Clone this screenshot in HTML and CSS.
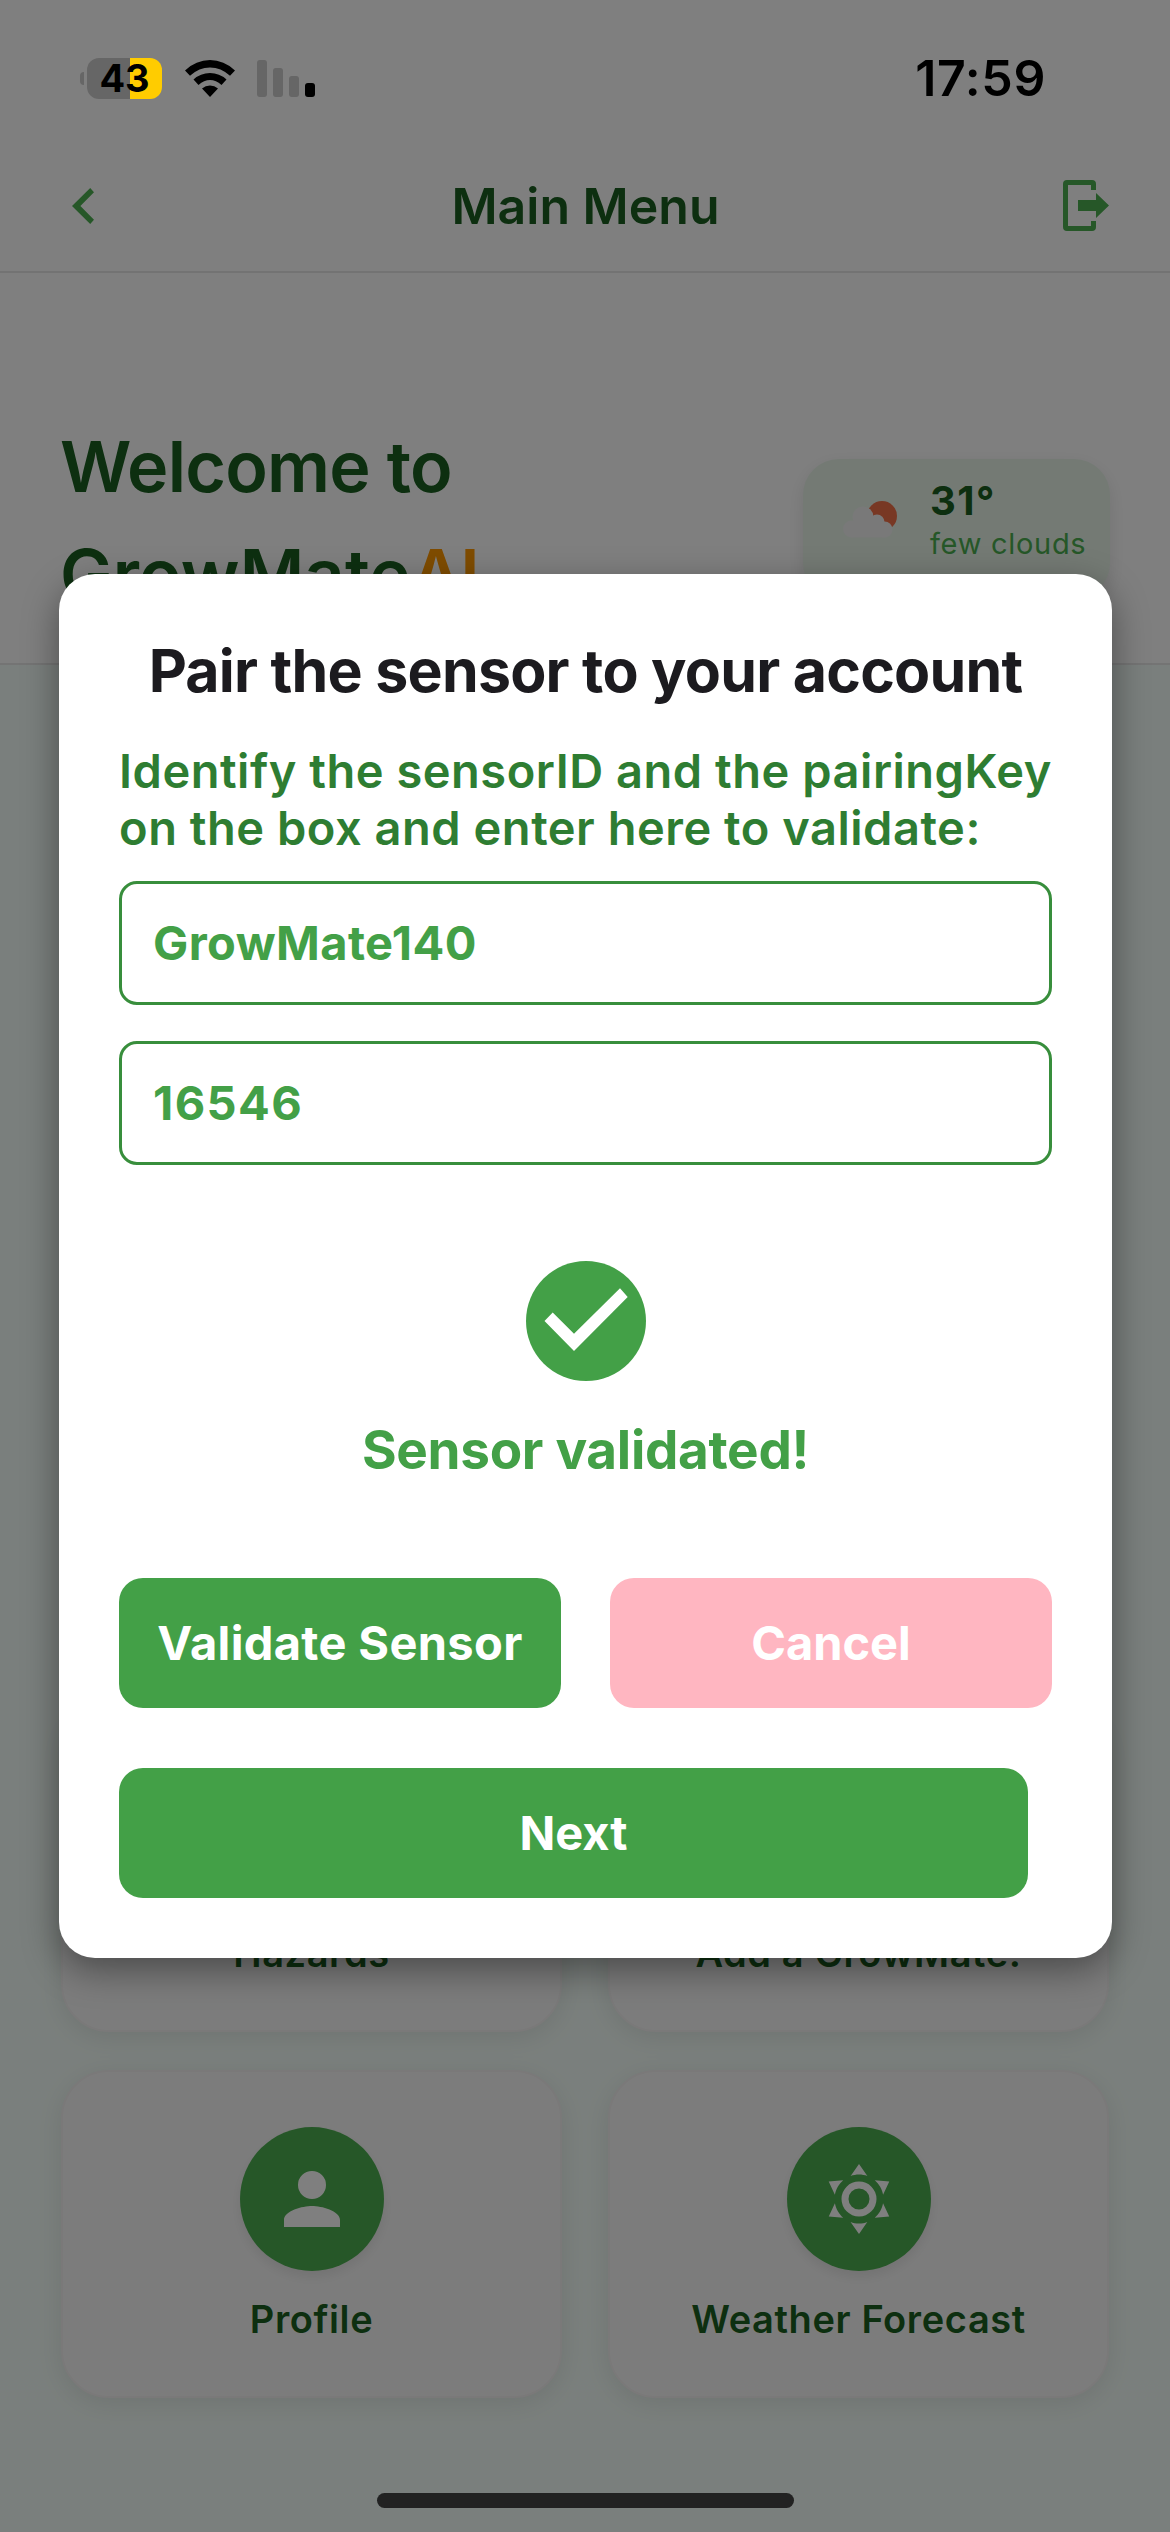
FILE: index.html
```html
<!DOCTYPE html>
<html lang="en">
<head>
<meta charset="utf-8">
<title>GrowMate – Main Menu</title>
<link rel="stylesheet" href="styles.css">
</head>
<body>
<div class="screen">
  <header class="navbar">
    <svg class="back" viewBox="0 0 22 36"><path d="M18.200 0 22 4.200 8.400 18 22 31.800 18.200 36 0 18Z"/></svg>
    <h1 class="nav-title">Main Menu</h1>
    <svg class="logout" viewBox="0 0 46 51"><path d="M28 10V5H5v41h23v-5h5v6q0 4-4 4H4q-4 0-4-4V4q0-4 4-4h25q4 0 4 4v6ZM15 20h18v-7l13 12.500-13 12.500v-7H15Z"/></svg>
  </header>
  <section class="hero">
    <h2 class="welcome"><span class="w1">Welcome to</span><br><span class="w2">GrowMate</span><span class="ai">AI</span></h2>
    <div class="weather">
      <svg class="cloud" viewBox="0 0 54 37"><circle cx="39" cy="15" r="15" fill="#f07048"/><g fill="#f2f2f2"><circle cx="20" cy="16" r="10.500"/><circle cx="8.500" cy="28" r="8.500"/><circle cx="34" cy="21" r="7.500"/><circle cx="41.500" cy="28.500" r="8"/><path d="M8 20h30l4 16.500H8Z"/></g></svg>
      <div class="weather-text"><strong class="temp">31°</strong><span class="desc">few clouds</span></div>
    </div>
  </section>
  <main class="grid">
    <div class="card"><span class="disc"></span><span class="label">Hazards</span></div>
    <div class="card"><span class="disc"></span><span class="label">Add a GrowMate!</span></div>
    <div class="card">
      <span class="disc"><svg viewBox="0 0 24 24"><path d="M12 12a4 4 0 1 0 0-8 4 4 0 0 0 0 8Zm0 2c-2.670 0-8 1.340-8 4v2h16v-2c0-2.660-5.330-4-8-4Z"/></svg></span>
      <span class="label">Profile</span>
    </div>
    <div class="card">
      <span class="disc"><svg viewBox="0 0 24 24"><path d="M12,7A5,5 0 0,1 17,12A5,5 0 0,1 12,17A5,5 0 0,1 7,12A5,5 0 0,1 12,7M12,9A3,3 0 0,0 9,12A3,3 0 0,0 12,15A3,3 0 0,0 15,12A3,3 0 0,0 12,9M12,2L14.39,5.42C13.65,5.15 12.84,5 12,5C11.16,5 10.35,5.15 9.61,5.42L12,2M3.34,7L7.5,6.65C6.9,7.16 6.36,7.78 5.94,8.5C5.5,9.24 5.25,10 5.11,10.79L3.34,7M3.36,17L5.12,13.23C5.26,14 5.53,14.78 5.95,15.5C6.37,16.24 6.91,16.86 7.5,17.37L3.36,17M20.65,7L18.88,10.79C18.74,10 18.47,9.23 18.05,8.5C17.63,7.78 17.1,7.15 16.5,6.64L20.65,7M20.64,17L16.5,17.36C17.09,16.85 17.62,16.22 18.04,15.5C18.46,14.77 18.73,14 18.87,13.21L20.64,17M12,22L9.59,18.56C10.33,18.83 11.14,19 12,19C12.82,19 13.63,18.83 14.37,18.56L12,22Z"/></svg></span>
      <span class="label">Weather Forecast</span>
    </div>
  </main>
</div>

<div class="overlay">
  <div class="status">
    <div class="status-left">
      <span class="nub"></span>
      <span class="battery">43</span>
      <svg class="wifi" viewBox="0 0 50 37"><path d="M0 10.500Q11 0 25 0T50 10.500L45 15.800Q36 7.500 25 7.500T5 15.800ZM8.500 19.500Q15.500 13 25 13T41.500 19.500L36.500 25Q31 20 25 20T13.500 25ZM17 28.500Q20.500 25.500 25 25.500T33 28.500L25 37Z"/></svg>
      <svg class="bars" viewBox="0 0 58 37"><g fill="#666"><rect width="10" height="37" rx="3"/><rect x="16" y="8" width="10" height="29" rx="3"/><rect x="32" y="16" width="10" height="21" rx="3"/></g><rect x="48" y="23" width="10" height="14" rx="3"/></svg>
    </div>
    <span class="time">17:59</span>
  </div>

  <section class="dialog">
    <h2 class="dialog-title">Pair the sensor to your account</h2>
    <p class="hint">Identify the sensorID and the pairingKey<br>on the box and enter here to validate:</p>
    <div class="field">GrowMate140</div>
    <div class="field key">16546</div>
    <div class="result">
      <svg class="check" viewBox="0 0 120 120"><circle cx="60" cy="60" r="60" fill="#43a047"/><path d="M18.500 60 26.700 51.500 48 72.800 94 27.200 101.700 36 48 90Z" fill="#fff"/></svg>
      <span class="result-text">Sensor validated!</span>
    </div>
    <div class="actions">
      <div class="btn validate">Validate Sensor</div>
      <div class="btn cancel">Cancel</div>
    </div>
    <div class="btn next">Next</div>
  </section>

  <div class="home"></div>
</div>
</body>
</html>
```
FILE: styles.css
```css
* { box-sizing: border-box; }
body { margin: 0; font-family: Inter, "Liberation Sans", sans-serif; }
h1, h2, p { margin: 0; }
svg { display: block; flex: none; }
span { white-space: nowrap; }

.screen { width: 1170px; height: 2532px; background: #f5fffa; overflow: hidden; color: #1b5e20; }

/* top navigation */
.navbar { height: 273px; padding: 140px 61px 0 72px; background: #fff; border-bottom: 2px solid #e6e6e6; display: flex; align-items: center; justify-content: space-between; }
.back { width: 22px; height: 40px; fill: #4caf50; }
.logout { width: 46px; height: 51px; fill: #4caf50; }
.nav-title { font-size: 50px; line-height: 60px; font-weight: 600; margin-left: 14px; }

/* greeting */
.hero { height: 392px; padding: 141px 60px 0 61px; background: #fff; border-bottom: 2px solid #e8e8e8; display: flex; justify-content: space-between; align-items: flex-start; }
.welcome { font-size: 70px; line-height: 108px; font-weight: 600; margin-top: -1px; margin-left: -1px; }
.w1 { letter-spacing: -.8px; }
.w2 { letter-spacing: .2px; }
.ai { color: #ff9800; letter-spacing: -1.5px; }
.weather { width: 307px; height: 140px; margin-top: 45px; padding: 0 26px 0 40px; border-radius: 36px; background: #e8f5e9; box-shadow: 0 6px 18px rgba(0,0,0,.1); display: flex; justify-content: space-between; }
.cloud { width: 54px; height: 37px; margin-top: 42px; }
.weather-text { display: flex; flex-direction: column; width: 154px; padding-top: 20px; }
.temp { font-size: 40px; line-height: 44px; font-weight: 700; letter-spacing: 1.5px; }
.desc { font-size: 29px; line-height: 36px; color: #4caf50; margin-top: 3px; letter-spacing: .7px; }

/* menu cards */
.grid { padding: 1039px 61px 0; display: grid; grid-template-columns: 501px 501px; justify-content: space-between; gap: 38px; }
.card { height: 328px; padding-top: 55px; border-radius: 48px; background: #f9f9f9; border: 2px solid #f4f2f2; box-shadow: 0 6px 26px rgba(0,0,0,.09); display: flex; flex-direction: column; align-items: center; }
.disc { width: 144px; height: 144px; flex: none; border-radius: 50%; background: #4caf50; box-shadow: 0 6px 12px rgba(0,0,0,.08); display: flex; align-items: center; justify-content: center; }
.disc svg { width: 84px; height: 84px; fill: #fff; }
.label { font-size: 38px; line-height: 46px; font-weight: 600; margin-top: 25px; letter-spacing: .6px; }

/* dimmed layer with the dialog */
.overlay { position: absolute; inset: 0; width: 1170px; height: 2532px; background: rgba(0,0,0,.5); display: flex; flex-direction: column; align-items: center; }
.status { width: 100%; height: 574px; padding: 48px 124px 0 80px; display: flex; justify-content: space-between; align-items: flex-start; }
.status-left { display: flex; align-items: center; height: 60px; }
.nub { width: 4px; height: 13px; background: #666; border-radius: 4px 0 0 4px; margin-right: 3px; }
.battery { width: 75px; height: 41px; border-radius: 12px; background: linear-gradient(90deg, #666 43px, #fc0 43px); font-size: 38px; line-height: 41px; font-weight: 700; text-align: center; }
.wifi { width: 50px; height: 37px; margin-left: 23px; }
.bars { width: 58px; height: 37px; margin-left: 22px; }
.time { font-size: 50px; line-height: 60px; font-weight: 600; letter-spacing: .6px; }

.dialog { width: 1053px; height: 1384px; margin-left: 1px; padding: 59px 60px 0; background: #fff; border-radius: 36px; box-shadow: 0 12px 36px rgba(0,0,0,.4); flex: none; }
.dialog-title { font-size: 59px; line-height: 76px; font-weight: 700; color: #1c1b1f; text-align: center; white-space: nowrap; letter-spacing: -.75px; }
.hint { font-size: 47px; line-height: 57px; font-weight: 600; color: #2e7d32; margin-top: 33px; letter-spacing: .52px; white-space: nowrap; }
.field { height: 124px; border: 3px solid #388e3c; border-radius: 18px; padding-left: 31px; font-size: 47px; line-height: 118px; font-weight: 700; color: #43a047; margin-top: 25px; letter-spacing: .4px; }
.key { margin-top: 36px; letter-spacing: 1.4px; }
.result { margin-top: 96px; display: flex; flex-direction: column; align-items: center; }
.check { width: 120px; height: 120px; }
.result-text { font-size: 53px; line-height: 64px; font-weight: 700; color: #43a047; margin-top: 37px; letter-spacing: -.3px; }
.actions { display: flex; justify-content: space-between; margin-top: 96px; }
.btn { width: 442px; height: 130px; border-radius: 24px; background: #43a047; color: #fff; font-size: 47px; line-height: 130px; font-weight: 700; text-align: center; }
.validate { letter-spacing: .35px; }
.cancel { background: #ffb6c1; }
.next { width: 909px; margin-top: 60px; }

.home { width: 417px; height: 15px; margin-top: 535px; border-radius: 8px; background: #222; }
```
